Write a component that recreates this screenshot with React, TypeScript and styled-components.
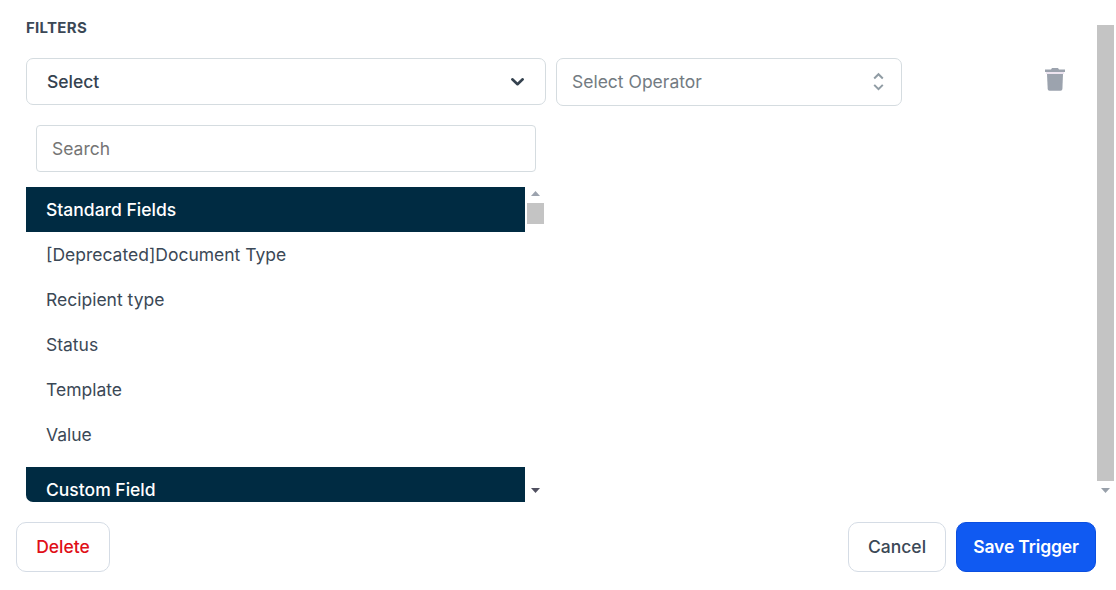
import React, { useState } from 'react';
import styled, { createGlobalStyle } from 'styled-components';

const GlobalStyle = createGlobalStyle`
  * {
    box-sizing: border-box;
  }

  body {
    margin: 0;
    background: #ffffff;
    color: #3b4856;
    font-family: Inter, 'Liberation Sans', sans-serif;
    font-size: 17.5px;
  }

  button,
  input {
    font-family: inherit;
    font-size: inherit;
    color: inherit;
  }
`;

const Page = styled.div`
  display: flex;
  flex-direction: column;
  width: 1116px;
  height: 590px;
  overflow: hidden;
`;

const Body = styled.div`
  display: flex;
  justify-content: space-between;
  height: 502px;
  padding: 0 2px 0 26px;
`;

const Content = styled.div`
  width: 1039px;
`;

const Title = styled.h2`
  margin: 0;
  padding-top: 18px;
  height: 58px;
  font-size: 15px;
  line-height: 20px;
  font-weight: 700;
  letter-spacing: 0.3px;
`;

const FilterRow = styled.div`
  display: flex;
  align-items: flex-start;
  gap: 10px;
`;

const Dropdown = styled.div`
  width: 520px;
`;

const SelectBox = styled.button<{ $width: number; $height: number; $muted?: boolean }>`
  display: flex;
  align-items: center;
  justify-content: space-between;
  width: ${(p) => p.$width}px;
  height: ${(p) => p.$height}px;
  padding: ${(p) => (p.$muted ? '0 16px 0 15px' : '0 20px')};
  background: #ffffff;
  border: 1px solid #d5dce0;
  border-radius: 7px;
  color: ${(p) => (p.$muted ? '#737b82' : '#35424f')};
  font-weight: ${(p) => (p.$muted ? 400 : 500)};
  line-height: 22px;
  cursor: pointer;
`;

const SelectLabel = styled.span`
  padding-bottom: 1px;
`;

const SearchInput = styled.input`
  display: block;
  width: 500px;
  height: 47px;
  margin: 20px 10px 15px;
  padding: 0 15px;
  border: 1px solid #d5dce0;
  border-radius: 4px;
  outline: none;

  &::placeholder {
    color: #757575;
    opacity: 1;
  }
`;

const ListWrap = styled.div`
  display: flex;
  gap: 2px;
  height: 315px;
  overflow: hidden;
  border-radius: 0 0 7px 7px;
`;

const List = styled.div`
  width: 499px;
`;

const GroupHeader = styled.div`
  height: 45px;
  padding: 0 20px;
  line-height: 45px;
  background: #002b42;
  color: #ffffff;
  font-weight: 500;
`;

const Options = styled.div`
  padding-bottom: 10px;
`;

const Option = styled.div`
  height: 45px;
  padding: 0 20px;
  line-height: 45px;
  cursor: pointer;
`;

const Scrollbar = styled.div`
  display: flex;
  flex-direction: column;
  align-items: center;
  width: 17px;
`;

const Thumb = styled.div<{ $top: number; $height: number }>`
  width: 17px;
  height: ${(p) => p.$height}px;
  margin-top: ${(p) => p.$top}px;
  background: #c4c4c4;
`;

const Arrow = styled.svg<{ $top?: number }>`
  display: block;
  width: 9px;
  height: 5px;
  margin-top: ${(p) => p.$top || 0}px;
`;

const TrashButton = styled.button`
  margin: 10px 0 0 auto;
  padding: 0;
  border: none;
  background: none;
  line-height: 0;
  cursor: pointer;
`;

const Footer = styled.div`
  display: flex;
  gap: 10px;
  padding: 20px 20px 0 16px;
`;

const Button = styled.button<{ $width: number; $variant?: 'danger' | 'primary' }>`
  width: ${(p) => p.$width}px;
  height: 50px;
  padding: 0 0 1px;
  border: 1px solid ${(p) => (p.$variant === 'primary' ? '#0b4fe0' : '#d5dce5')};
  border-radius: 10px;
  background: ${(p) => (p.$variant === 'primary' ? '#105af2' : '#ffffff')};
  color: ${(p) => (p.$variant === 'primary' ? '#ffffff' : p.$variant === 'danger' ? '#e00f17' : '#3b4856')};
  font-weight: ${(p) => (p.$variant === 'primary' ? 600 : 500)};
  letter-spacing: ${(p) => (p.$variant === 'primary' ? '-0.15px' : 'normal')};
  cursor: pointer;

  &:first-child {
    margin-right: auto;
  }
`;

const standardFields = ['[Deprecated]Document Type', 'Recipient type', 'Status', 'Template', 'Value'];

const App: React.FC = () => {
  const [search, setSearch] = useState('');
  const [selected, setSelected] = useState('Select');

  const fields = standardFields.filter((f) => f.toLowerCase().includes(search.toLowerCase()));

  return (
    <Page>
      <GlobalStyle />
      <Body>
        <Content>
          <Title>FILTERS</Title>
          <FilterRow>
            <Dropdown>
              <SelectBox $width={520} $height={47}>
                {selected}
                <svg width="15" height="10" viewBox="0 0 15 10" fill="none">
                  <path d="M2.3 2.3l5.2 4.9 5.2-4.9" stroke="#35424f" strokeWidth="2.6" strokeLinecap="round" strokeLinejoin="round" />
                </svg>
              </SelectBox>
              <SearchInput placeholder="Search" value={search} onChange={(e) => setSearch(e.target.value)} />
              <ListWrap>
                <List>
                  <GroupHeader>Standard Fields</GroupHeader>
                  <Options>
                    {fields.map((field) => (
                      <Option key={field} onClick={() => setSelected(field)}>
                        {field}
                      </Option>
                    ))}
                  </Options>
                  <GroupHeader>Custom Field</GroupHeader>
                </List>
                <Scrollbar>
                  <Arrow $top={4} viewBox="0 0 9 5">
                    <path d="M0 5L4.5 0L9 5z" fill="#9ca3ae" />
                  </Arrow>
                  <Thumb $top={7} $height={21} />
                  <Arrow $top={264} viewBox="0 0 9 5">
                    <path d="M0 0L4.5 5L9 0z" fill="#505060" />
                  </Arrow>
                </Scrollbar>
              </ListWrap>
            </Dropdown>
            <SelectBox $width={346} $height={48} $muted>
              <SelectLabel>Select Operator</SelectLabel>
              <svg width="13" height="20" viewBox="0 0 13 20" fill="none">
                <path d="M2.2 6.5L6.5 2.2l4.3 4.3M2.2 12.9l4.3 4.3 4.3-4.3" stroke="#909ca4" strokeWidth="2" />
              </svg>
            </SelectBox>
            <TrashButton aria-label="Remove filter">
              <svg width="20" height="23" viewBox="0 0 20 23">
                <path d="M0 1.5h6L7 0h6l1 1.5h6V4H0z" fill="#9ca3ae" />
                <path d="M1 4h18v2H1z" fill="#ede4f0" />
                <path d="M2 6h16l-.6 15q-.1 1.8-1.8 1.8H4.5q-1.7 0-1.8-1.8z" fill="#9ca3ae" />
              </svg>
            </TrashButton>
          </FilterRow>
        </Content>
        <Scrollbar>
          <Thumb $top={25} $height={456} />
          <Arrow $top={7} viewBox="0 0 9 5">
            <path d="M0 0L4.5 5L9 0z" fill="#98a0aa" />
          </Arrow>
        </Scrollbar>
      </Body>
      <Footer>
        <Button $width={94} $variant="danger">Delete</Button>
        <Button $width={98}>Cancel</Button>
        <Button $width={140} $variant="primary">Save Trigger</Button>
      </Footer>
    </Page>
  );
};

export default App;
